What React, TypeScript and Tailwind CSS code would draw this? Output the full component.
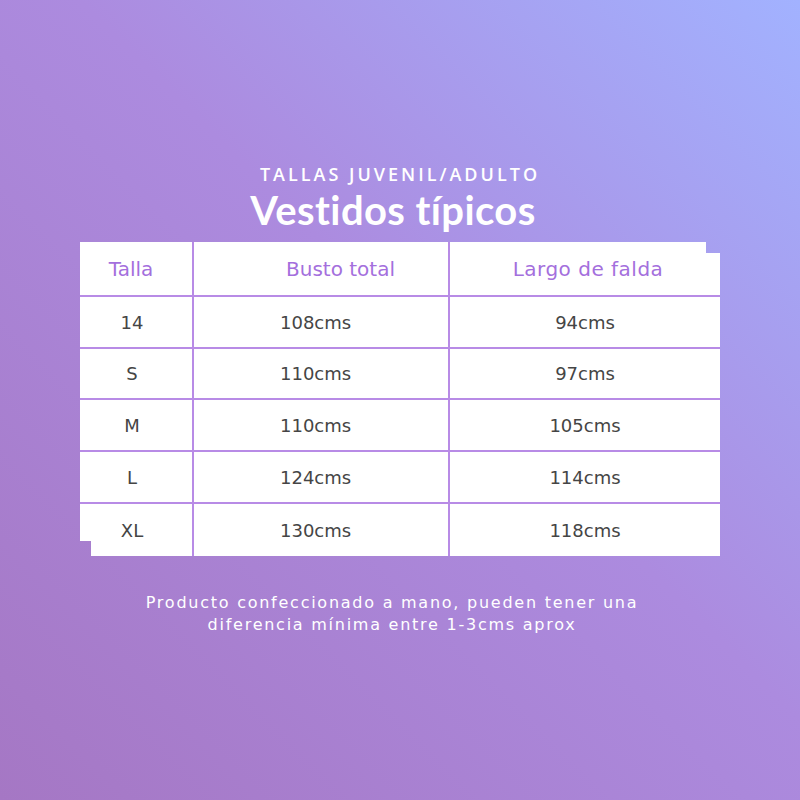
import React from "react";

const rows = [
  { talla: "14", busto: "108cms", largo: "94cms" },
  { talla: "S", busto: "110cms", largo: "97cms" },
  { talla: "M", busto: "110cms", largo: "105cms" },
  { talla: "L", busto: "124cms", largo: "114cms" },
  { talla: "XL", busto: "130cms", largo: "118cms" },
];

export default function App() {
  return (
    <div className="w-[800px] h-[800px] flex flex-col items-center bg-[linear-gradient(45deg,#a577c4_0%,#ac8bdf_55%,#a2b2ff_100%)] font-['DejaVu_Sans',sans-serif]">
      {/* Heading */}
      <div className="pt-[163px] flex flex-col items-center text-white">
        <p className="text-[18px] leading-[22px] font-semibold tracking-[3px] font-['Open_Sans',sans-serif]">
          TALLAS JUVENIL/ADULTO
        </p>
        <h1 className="mt-[2px] text-[40px] leading-[46px] font-bold font-['Lato',sans-serif] tracking-[0.4px] -ml-[14px]">
          Vestidos típicos
        </h1>
      </div>

      {/* Table */}
      <div className="mt-[9px] w-[640px] h-[314px] bg-white grid grid-cols-[114px_256px_270px] grid-rows-[55px_52px_51px_52px_52px_52px] [clip-path:polygon(0_0,626px_0,626px_11px,100%_11px,100%_100%,11px_100%,11px_299px,0_299px)]">
        <div className="border-b-2 border-r-2 border-[#b88be6] flex items-center justify-center pr-[10px] text-[20px] text-[#a46fdd]">
          Talla
        </div>
        <div className="border-b-2 border-r-2 border-[#b88be6] flex items-center pl-[92px] text-[20px] text-[#a46fdd]">
          Busto total
        </div>
        <div className="border-b-2 border-[#b88be6] flex items-center justify-center pl-[6px] text-[20px] tracking-[0.5px] text-[#a46fdd]">
          Largo de falda
        </div>
        {rows.map((r, i) => {
          const last = i === rows.length - 1;
          return (
            <React.Fragment key={r.talla}>
              <div
                className={`border-r-2 border-[#b88be6] flex items-center justify-center pr-[8px] text-[18px] text-[#454545] ${
                  last ? "" : "border-b-2"
                }`}
              >
                {r.talla}
              </div>
              <div
                className={`border-r-2 border-[#b88be6] flex items-center pl-[86px] text-[18px] text-[#454545] ${
                  last ? "" : "border-b-2"
                }`}
              >
                {r.busto}
              </div>
              <div
                className={`border-[#b88be6] flex items-center justify-center text-[18px] text-[#454545] ${
                  last ? "" : "border-b-2"
                }`}
              >
                {r.largo}
              </div>
            </React.Fragment>
          );
        })}
      </div>

      {/* Footer note */}
      <p className="mt-[36px] mr-[16px] text-center text-white text-[16px] leading-[22px] tracking-[1.75px]">
        Producto confeccionado a mano, pueden tener una
        <br />
        diferencia mínima entre 1-3cms aprox
      </p>
    </div>
  );
}
